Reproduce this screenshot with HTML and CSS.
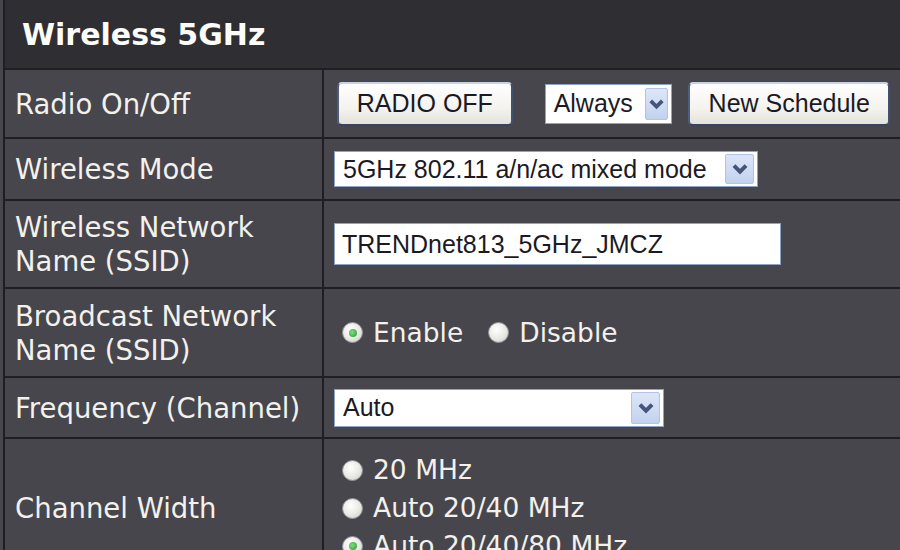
FILE: index.html
```html
<!DOCTYPE html>
<html lang="en">
<head>
    <meta charset="UTF-8">
    <title>Wireless 5GHz</title>
    <link rel="stylesheet" href="styles.css">
</head>
<body>
    <table class="settings">
        <colgroup>
            <col class="col-label">
            <col>
        </colgroup>
        <tr>
            <th class="title" colspan="2">Wireless 5GHz</th>
        </tr>
        <tr class="row-radio">
            <td class="label">Radio On/Off</td>
            <td class="field">
                <div class="controls">
                    <button type="button" class="btn btn-radio">RADIO OFF</button>
                    <span class="select select-schedule">
                        <span class="select-text">Always</span>
                        <span class="select-arrow"><svg viewBox="0 0 20 20"><path d="M4.5 7 L10 12.5 L15.5 7"/></svg></span>
                    </span>
                    <button type="button" class="btn btn-schedule">New Schedule</button>
                </div>
            </td>
        </tr>
        <tr class="row-mode">
            <td class="label">Wireless Mode</td>
            <td class="field">
                <span class="select select-mode">
                    <span class="select-text">5GHz 802.11 a/n/ac mixed mode</span>
                    <span class="select-arrow"><svg viewBox="0 0 20 20"><path d="M4.5 7 L10 12.5 L15.5 7"/></svg></span>
                </span>
            </td>
        </tr>
        <tr class="row-ssid">
            <td class="label">Wireless Network<br>Name (SSID)</td>
            <td class="field">
                <input type="text" class="text-input" value="TRENDnet813_5GHz_JMCZ">
            </td>
        </tr>
        <tr class="row-broadcast">
            <td class="label">Broadcast Network<br>Name (SSID)</td>
            <td class="field">
                <div class="option-row">
                    <span class="option"><span class="radio checked"></span>Enable</span>
                    <span class="option"><span class="radio"></span>Disable</span>
                </div>
            </td>
        </tr>
        <tr class="row-freq">
            <td class="label">Frequency (Channel)</td>
            <td class="field">
                <span class="select select-freq">
                    <span class="select-text">Auto</span>
                    <span class="select-arrow"><svg viewBox="0 0 20 20"><path d="M4.5 7 L10 12.5 L15.5 7"/></svg></span>
                </span>
            </td>
        </tr>
        <tr class="row-width">
            <td class="label">Channel Width</td>
            <td class="field">
                <div class="option-list">
                    <span class="option"><span class="radio"></span>20 MHz</span>
                    <span class="option"><span class="radio"></span>Auto 20/40 MHz</span>
                    <span class="option"><span class="radio checked"></span>Auto 20/40/80 MHz</span>
                </div>
            </td>
        </tr>
    </table>
</body>
</html>
```

FILE: styles.css
```css
html,
body {
    margin: 0;
    overflow: hidden;
    background-color: #47464c;
}

body {
    padding-left: 3px;
    font-family: "DejaVu Sans", Verdana, sans-serif;
    color: #f2f1ec;
}

.settings {
    border-collapse: collapse;
    table-layout: fixed;
    width: 897px;
}

.col-label {
    width: 319px;
}

.settings th,
.settings td {
    border: 2px solid #1f1f23;
    background-color: #47464c;
}

.settings tr:first-child th {
    border-top: none;
}

.settings th:last-child,
.settings td:last-child {
    border-right: none;
}

.title {
    height: 68px;
    padding: 0 0 0 17px;
    text-align: left;
    font-size: 30px;
    font-weight: bold;
    color: #fbfbf8;
    background-color: #2f2e33 !important;
}

.label {
    padding: 0 10px;
    font-size: 27.5px;
    line-height: 34px;
    vertical-align: middle;
}

.field {
    padding: 0 10px;
    vertical-align: middle;
    font-family: "Liberation Sans", Arial, sans-serif;
    font-size: 25px;
    color: #1b1a24;
    white-space: nowrap;
}

.row-radio td { height: 67px; }
.row-mode td { height: 60px; }
.row-ssid td { height: 86px; }
.row-broadcast td { height: 87px; }
.row-freq td { height: 59px; }
.row-width td { height: 138px; }

.controls {
    display: flex;
    align-items: center;
}

/* buttons */
.btn {
    height: 44px;
    padding: 0;
    font-family: "Liberation Sans", Arial, sans-serif;
    font-size: 25px;
    color: #1b1a24;
    background: linear-gradient(#ffffff, #f4f3ee 60%, #e3e2db);
    border: 2px solid;
    border-color: #c9d2e3 #40506e #334361 #4e5e7e;
    border-radius: 5px;
}

.btn-radio {
    width: 176px;
    margin-left: 3px;
}

.btn-schedule {
    width: 202px;
    margin-left: 16px;
}

/* fake selects */
.select {
    display: inline-flex;
    align-items: center;
    box-sizing: border-box;
    vertical-align: middle;
    padding: 0 3px 0 8px;
    background-color: #fff;
    border: 1px solid #8ea4c4;
}

.select-text {
    flex: 1;
}

.select-arrow {
    display: flex;
    align-items: center;
    justify-content: center;
    box-sizing: border-box;
    width: 29px;
    margin-left: 6px;
    background: linear-gradient(#dde6f7, #c2d2ee);
    border: 1px solid #b3c5e6;
    border-radius: 2px;
}

.select-arrow svg {
    width: 22px;
    height: 22px;
}

.select-arrow path {
    fill: none;
    stroke: #45557a;
    stroke-width: 3.6;
}

.select-schedule {
    width: 128px;
    height: 40px;
    margin-left: 32px;
}

.select-schedule .select-arrow {
    width: 23px;
    height: 32px;
}

.select-mode {
    width: 424px;
    height: 36px;
}

.select-mode .select-arrow {
    height: 30px;
}

.select-freq {
    width: 330px;
    height: 38px;
}

.select-freq .select-arrow {
    height: 32px;
}

/* text input */
.text-input {
    box-sizing: border-box;
    width: 447px;
    height: 42px;
    padding: 0 7px;
    font-family: "Liberation Sans", Arial, sans-serif;
    font-size: 25px;
    color: #1b1a24;
    border: 1px solid #8ea4c4;
    background-color: #fff;
}

/* radio options */
.option-row {
    display: flex;
    align-items: center;
    gap: 17px;
}

.option {
    display: inline-flex;
    align-items: center;
    padding-left: 8px;
    font-family: "DejaVu Sans", Verdana, sans-serif;
    font-size: 26.5px;
    color: #f2f1ec;
}

.option-list {
    display: flex;
    flex-direction: column;
    align-items: flex-start;
    line-height: 38px;
}

.radio {
    position: relative;
    width: 21px;
    height: 21px;
    margin-right: 10px;
    box-sizing: border-box;
    border-radius: 50%;
    border: 1px solid #8f8f94;
    background: radial-gradient(circle at 40% 35%, #ffffff, #e6e6e1 60%, #c9c9c4);
}

.radio.checked::after {
    content: "";
    position: absolute;
    left: 5.5px;
    top: 5.5px;
    width: 8px;
    height: 8px;
    border-radius: 50%;
    background: radial-gradient(circle at 40% 40%, #7fdc7f, #279a34);
}
```
